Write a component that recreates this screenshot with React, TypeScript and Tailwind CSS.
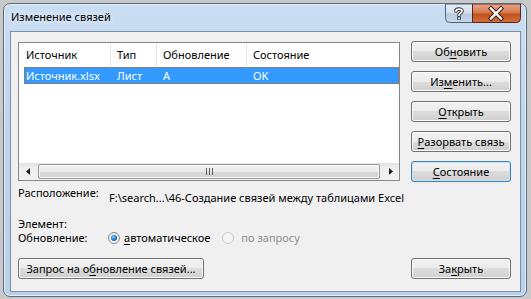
import React from "react";

const btnBase =
  "h-[21px] w-[100px] flex items-center justify-center rounded-[3px] border text-[11px] leading-[16px] text-black whitespace-nowrap bg-[linear-gradient(to_bottom,#f2f2f2_0%,#ebebeb_50%,#dddddd_50%,#cfcfcf_100%)]";

function Btn({ children, def, className = "" }: { children: React.ReactNode; def?: boolean; className?: string }) {
  return (
    <div
      className={
        btnBase +
        " " +
        (def
          ? "border-[#3c7fb1] shadow-[inset_0_0_0_1px_#c4e5f6]"
          : "border-[#707070] shadow-[inset_0_0_0_1px_#fbfbfb]") +
        " " +
        className
      }
    >
      {children}
    </div>
  );
}

function U({ children }: { children: React.ReactNode }) {
  return <span className="underline decoration-1 underline-offset-[2px]">{children}</span>;
}

function CaptionButtons() {
  return (
    <svg width="76" height="19" viewBox="0 0 76 19" className="block">
      <defs>
        <linearGradient id="hg" x1="0" y1="0" x2="0" y2="1">
          <stop offset="0" stopColor="#e6eef7" />
          <stop offset="0.45" stopColor="#d3dfed" />
          <stop offset="0.55" stopColor="#b8cbe1" />
          <stop offset="1" stopColor="#c8d8ea" />
        </linearGradient>
        <linearGradient id="cg" x1="0" y1="0" x2="0" y2="1">
          <stop offset="0" stopColor="#e9a98f" />
          <stop offset="0.45" stopColor="#d77a50" />
          <stop offset="0.55" stopColor="#c4511f" />
          <stop offset="1" stopColor="#d0703e" />
        </linearGradient>
      </defs>
      <path d="M0.5 0 V14.5 Q0.5 18.5 4.5 18.5 H27.5 V0 Z" fill="url(#hg)" stroke="#4e6179" />
      <path d="M27.5 0 V18.5 H71.5 Q75.5 18.5 75.5 14.5 V0 Z" fill="url(#cg)" stroke="#5a2518" />
      <g transform="translate(9,3)">
        <path d="M2 4 C2 1.5 8 1.5 8 4 C8 6 5 6 5 8.2" fill="none" stroke="#2a2a2a" strokeWidth="3.6" strokeLinecap="round" />
        <rect x="3.2" y="9.6" width="3.6" height="3.2" fill="#2a2a2a" />
        <path d="M2 4 C2 1.5 8 1.5 8 4 C8 6 5 6 5 8.2" fill="none" stroke="#ffffff" strokeWidth="1.8" strokeLinecap="round" />
        <rect x="4.1" y="10.4" width="1.8" height="1.8" fill="#ffffff" />
      </g>
      <g transform="translate(44.5,3.5)">
        <path d="M1.5 1 L11.5 11 M11.5 1 L1.5 11" stroke="#3a1a10" strokeWidth="4.4" strokeLinecap="square" />
        <path d="M1.5 1 L11.5 11 M11.5 1 L1.5 11" stroke="#ffffff" strokeWidth="2.4" strokeLinecap="square" />
      </g>
    </svg>
  );
}

export default function App() {
  return (
    <div className="w-[531px] h-[299px] overflow-hidden bg-[#c9c9c9] pl-[3px] pt-[3px] font-['Noto_Sans',sans-serif]">
      <div className="w-[524px] h-[294px] rounded-[7px] border border-[#5b6b7e] bg-[linear-gradient(to_bottom,#cadef3_0%,#bfd5ee_40%,#b9d0ea_100%)] shadow-[inset_0_0_0_1px_#e4eef9] flex flex-col">
        {/* title bar */}
        <div className="h-[27px] w-full flex items-start shrink-0">
          <div className="pl-[7px] pt-[5px] text-[11px] leading-[16px] text-black [text-shadow:0_0_6px_#ffffff]">
            Изменение связей
          </div>
          <div className="ml-auto mr-[5px]">
            <CaptionButtons />
          </div>
        </div>
        {/* client */}
        <div className="ml-[6px] w-[511px] h-[261px] border border-[#7d8fa5] bg-[#f0f0f0] pl-[7px] pt-[9px] text-[11px] leading-[16px] text-black">
          <div className="flex h-[141px]">
            {/* list */}
            <div className="mt-[1px] w-[382px] h-[139px] border border-[#828790] bg-white flex flex-col">
              <div className="h-[23px] flex items-center shrink-0">
                <div className="w-[92px] h-full border-r border-[#e5e5e5] pl-[7px] flex items-center">Источник</div>
                <div className="w-[46px] h-full border-r border-[#e5e5e5] pl-[6px] flex items-center">Тип</div>
                <div className="w-[90px] h-full border-r border-[#e5e5e5] pl-[6px] flex items-center">Обновление</div>
                <div className="flex-1 h-full pl-[6px] flex items-center">Состояние</div>
              </div>
              <div className="mt-[1px] ml-[5px] h-[17px] flex items-center bg-[#3399ff] text-white border border-dotted border-[#cc6600] shrink-0">
                <div className="w-[86px] pl-[1px]">Источник.xlsx</div>
                <div className="w-[46px] pl-[6px]">Лист</div>
                <div className="w-[90px] pl-[6px]">A</div>
                <div className="flex-1 pl-[6px]">OK</div>
              </div>
              <div className="flex-1" />
              {/* scrollbar */}
              <div className="h-[17px] flex shrink-0 bg-[linear-gradient(to_bottom,#e2e2e2_0%,#efefef_30%,#f2f2f2_100%)]">
                <div className="w-[17px] h-full flex items-center justify-center">
                  <svg width="4" height="7" viewBox="0 0 4 7">
                    <path d="M4 0 L0 3.5 L4 7 Z" fill="#202020" />
                  </svg>
                </div>
                <div className="flex-1 px-[2px] py-[1px] flex">
                  <div className="flex-1 rounded-[2px] border border-[#979797] bg-[linear-gradient(to_bottom,#f4f4f4_0%,#eaeaea_50%,#d9d9d9_51%,#d4d4d4_100%)] shadow-[inset_0_0_0_1px_#f8f8f8] flex items-center justify-center">
                    <div className="flex gap-[2px]">
                      <div className="w-[1px] h-[7px] bg-[#5c5c5c]" />
                      <div className="w-[1px] h-[7px] bg-[#5c5c5c]" />
                      <div className="w-[1px] h-[7px] bg-[#5c5c5c]" />
                    </div>
                  </div>
                </div>
                <div className="w-[17px] h-full flex items-center justify-center">
                  <svg width="4" height="7" viewBox="0 0 4 7">
                    <path d="M0 0 L4 3.5 L0 7 Z" fill="#202020" />
                  </svg>
                </div>
              </div>
            </div>
            {/* buttons */}
            <div className="ml-[11px] flex flex-col gap-[9px]">
              <Btn>
                Об<U>н</U>овить
              </Btn>
              <Btn>
                Из<U>м</U>енить...
              </Btn>
              <Btn>
                <U>О</U>ткрыть
              </Btn>
              <Btn>
                <U>Р</U>азорвать связь
              </Btn>
              <Btn def>
                <U>С</U>остояние
              </Btn>
            </div>
          </div>
          <div className="mt-[3px] h-[21px] flex items-start">
            <div className="w-[91px]">Расположение:</div>
            <div className="mt-[5px] whitespace-nowrap">F:\search...\46-Создание связей между таблицами Excel</div>
          </div>
          <div className="mt-[12px] h-[12px] leading-[12px]">Элемент:</div>
          <div className="mt-[1px] h-[14px] leading-[14px] flex items-center">
            <div className="w-[90px]">Обновление:</div>
            <div className="w-[12px] h-[12px] rounded-full border border-[#8c8c8c] bg-[linear-gradient(to_bottom,#e8e8e8,#fafafa)] flex items-center justify-center">
              <div className="w-[6px] h-[6px] rounded-full bg-[radial-gradient(circle_at_40%_35%,#8fd0ff_0%,#2a7fd4_45%,#0d3c7a_100%)]" />
            </div>
            <div className="ml-[4px]">
              <U>а</U>втоматическое
            </div>
            <div className="ml-[12px] w-[12px] h-[12px] rounded-full border border-[#c8c8c8] bg-[#f4f4f4]" />
            <div className="ml-[7px] text-[#8d8d8d]">по запросу</div>
          </div>
          <div className="mt-[13px] flex">
            <Btn className="w-[186px]">
              Запрос на о<U>б</U>новление связей...
            </Btn>
            <Btn className="ml-auto mr-[9px]">
              За<U>к</U>рыть
            </Btn>
          </div>
        </div>
      </div>
    </div>
  );
}
